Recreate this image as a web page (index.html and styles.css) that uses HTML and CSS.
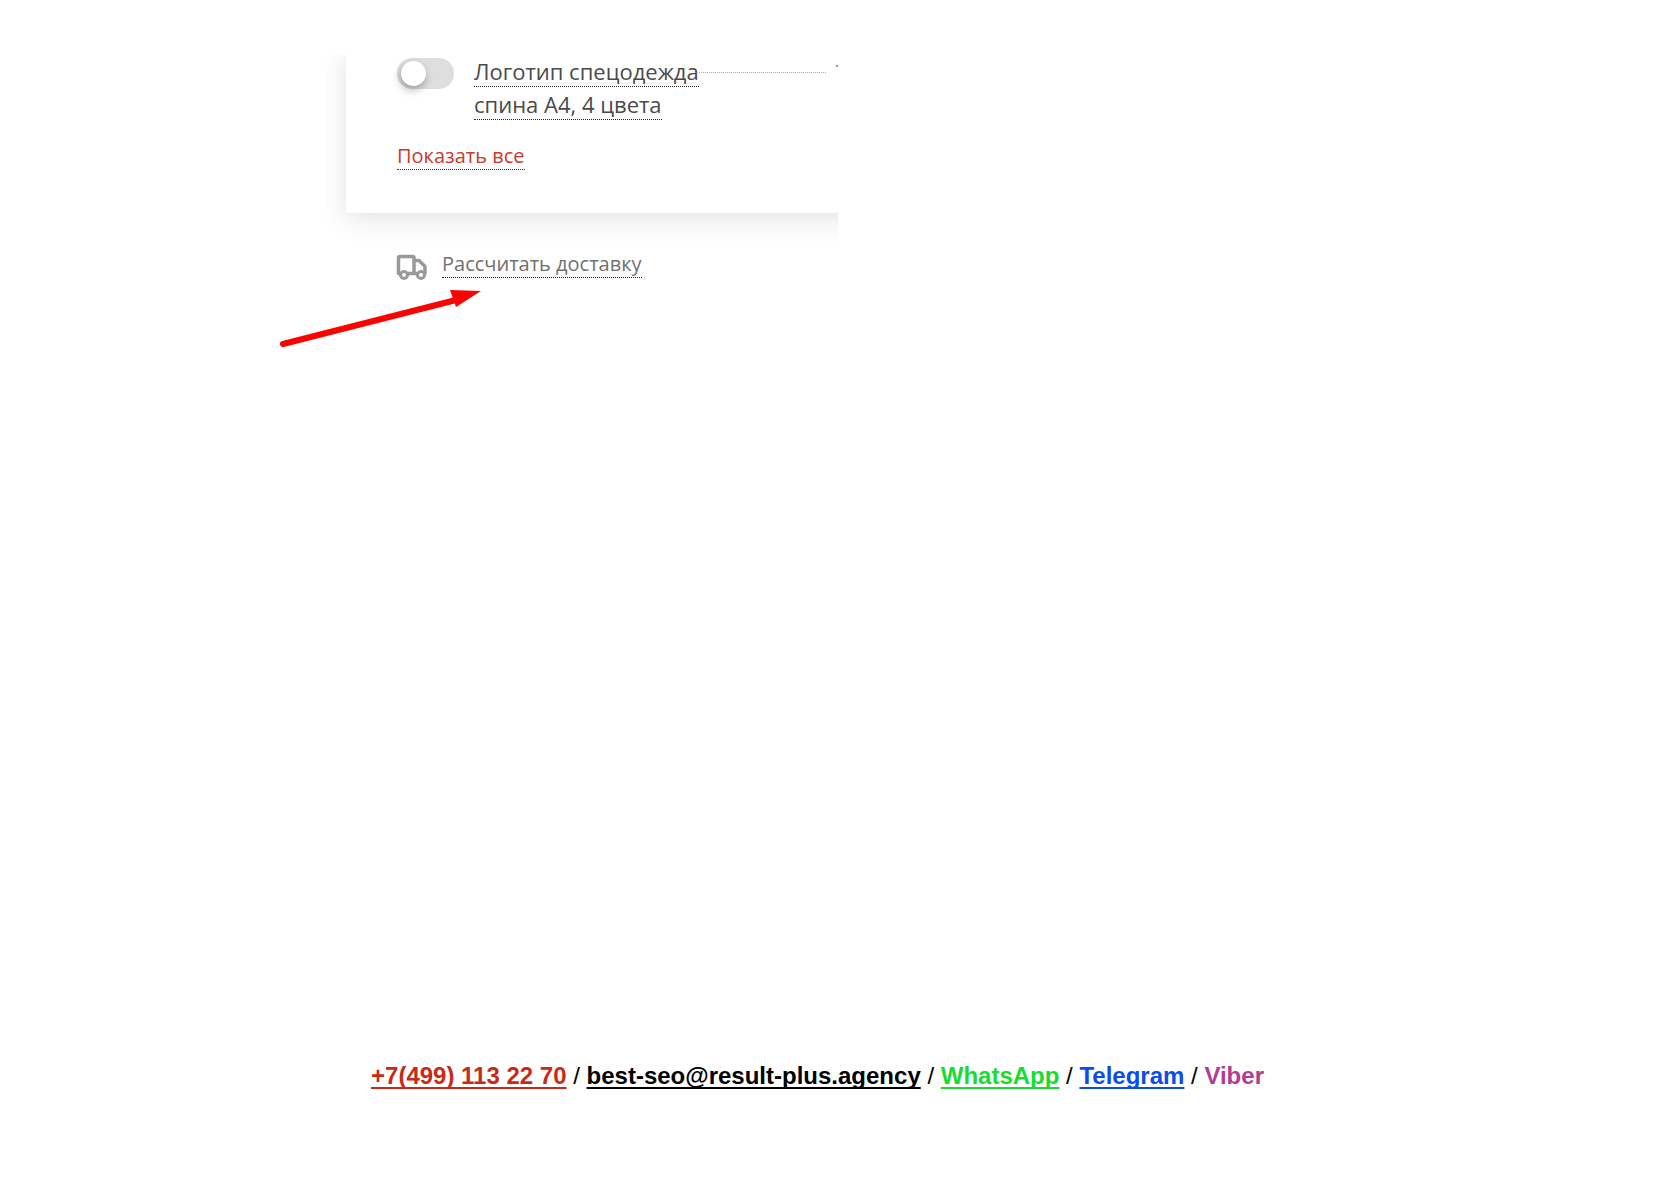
FILE: index.html
```html
<!DOCTYPE html>
<html lang="ru">
<head>
<meta charset="utf-8">
<title>Рассчитать доставку</title>
<link rel="stylesheet" href="styles.css">
</head>
<body>
<div class="page">
  <main class="example">
    <div class="shot">
      <section class="card">
        <div class="option">
          <input class="switch" type="checkbox" id="logo">
          <label class="option-name" for="logo"><span class="dotted">Логотип спецодежда<br>спина А4, 4 цвета</span></label>
          <span class="leader"></span>
          <span class="speck"></span>
        </div>
        <a class="dotted show-all" href="#all">Показать все</a>
      </section>
      <div class="delivery">
        <svg class="truck" viewBox="0 0 32 26" fill="none" stroke="#999" stroke-width="3.500" stroke-linejoin="round">
          <path d="M4 19.500H2.500V4Q2.500 2.500 4 2.500H16.500Q18 2.500 18 4V19.500H12M18 6.500H23L29 12.500V19.500H28M18 19.500H21"/>
          <circle cx="8" cy="21" r="3.500" stroke-width="3"/>
          <circle cx="25" cy="21" r="3.500" stroke-width="3"/>
        </svg>
        <div><a class="dotted" href="#delivery">Рассчитать доставку</a></div>
      </div>
    </div>
    <svg class="arrow" viewBox="0 0 202 58" aria-hidden="true">
      <path d="M3 54L176 10" stroke="#f90400" stroke-width="6" stroke-linecap="round"/>
      <path d="M170 0L201 1L176 17Z" fill="#f90400"/>
    </svg>
  </main>
  <footer class="contacts">
    <a class="phone" href="tel:+74991132270">+7(499) 113 22 70</a> /
    <a class="mail" href="mailto:best-seo@result-plus.agency">best-seo@result-plus.agency</a> /
    <a class="whatsapp" href="#whatsapp">WhatsApp</a> /
    <a class="telegram" href="#telegram">Telegram</a> /
    <a class="viber" href="#viber">Viber</a>
  </footer>
</div>
</body>
</html>
```
FILE: styles.css
```css
* {
  box-sizing: border-box;
}

body {
  margin: 0;
  background: #fff;
}

.page {
  display: flex;
  flex-direction: column;
  justify-content: space-between;
  max-width: 1120px;
  min-height: 100vh;
  margin: 0 auto;
  padding: 55px 0 98px;
}

.example {
  position: relative;
  padding-left: 46px;
}

.shot {
  max-width: 512px;
  padding: 0 0 16px 20px;
  overflow: hidden;
  color: #4a4a4a;
  font: 20px/33px "Open Sans", "Noto Sans", sans-serif;
}

.card {
  margin-right: -40px;
  padding: 0 40px 41px 51px;
  background: #fff;
  box-shadow: 0 4px 26px rgba(0, 0, 0, 0.13);
}

.option {
  position: relative;
  display: flex;
  align-items: flex-start;
  gap: 20px;
  margin-bottom: 18px;
}

.option-name {
  font-size: 22px;
}

.switch {
  appearance: none;
  flex: none;
  width: 57px;
  height: 31px;
  margin: 3px 0 0;
  padding: 3px 4px;
  border-radius: 16px;
  background: #dedede;
}

.switch::before {
  content: "";
  display: block;
  width: 25px;
  height: 25px;
  border-radius: 50%;
  background: #fff;
  box-shadow: -1px 4px 8px rgba(0, 0, 0, 0.3);
}

.dotted {
  border-bottom: 1px dotted #222;
  color: inherit;
  text-decoration: none;
}

.leader {
  flex: 1;
  margin: 17px 12px 0 -20px;
  border-top: 1px dotted #aaa;
}

.speck {
  position: absolute;
  top: 10px;
  right: 0;
  width: 2px;
  height: 2px;
  background: #999;
}

.show-all {
  border-color: #8c1408;
  color: #cb3a28;
}

.delivery {
  display: flex;
  align-items: flex-start;
  gap: 14px;
  padding: 34px 0 0 50px;
  color: #707070;
}

.truck {
  flex: none;
  width: 32px;
  height: 26px;
  margin-top: 7px;
}

.arrow {
  position: absolute;
  top: 235px;
  left: 0;
  width: 202px;
  height: 58px;
}

.contacts {
  padding-right: 45px;
  color: #000;
  font: 24px/28px "Liberation Sans", Arial, sans-serif;
  text-align: center;
}

.contacts a {
  color: inherit;
  font-weight: bold;
  text-decoration-skip-ink: none;
  text-decoration-thickness: 2px;
  text-underline-offset: 3px;
}

.contacts .phone {
  color: #c92a17;
}

.contacts .whatsapp {
  color: #18dc30;
}

.contacts .telegram {
  color: #0b4de6;
}

.contacts .viber {
  color: #b13c91;
  text-decoration: none;
}
```
